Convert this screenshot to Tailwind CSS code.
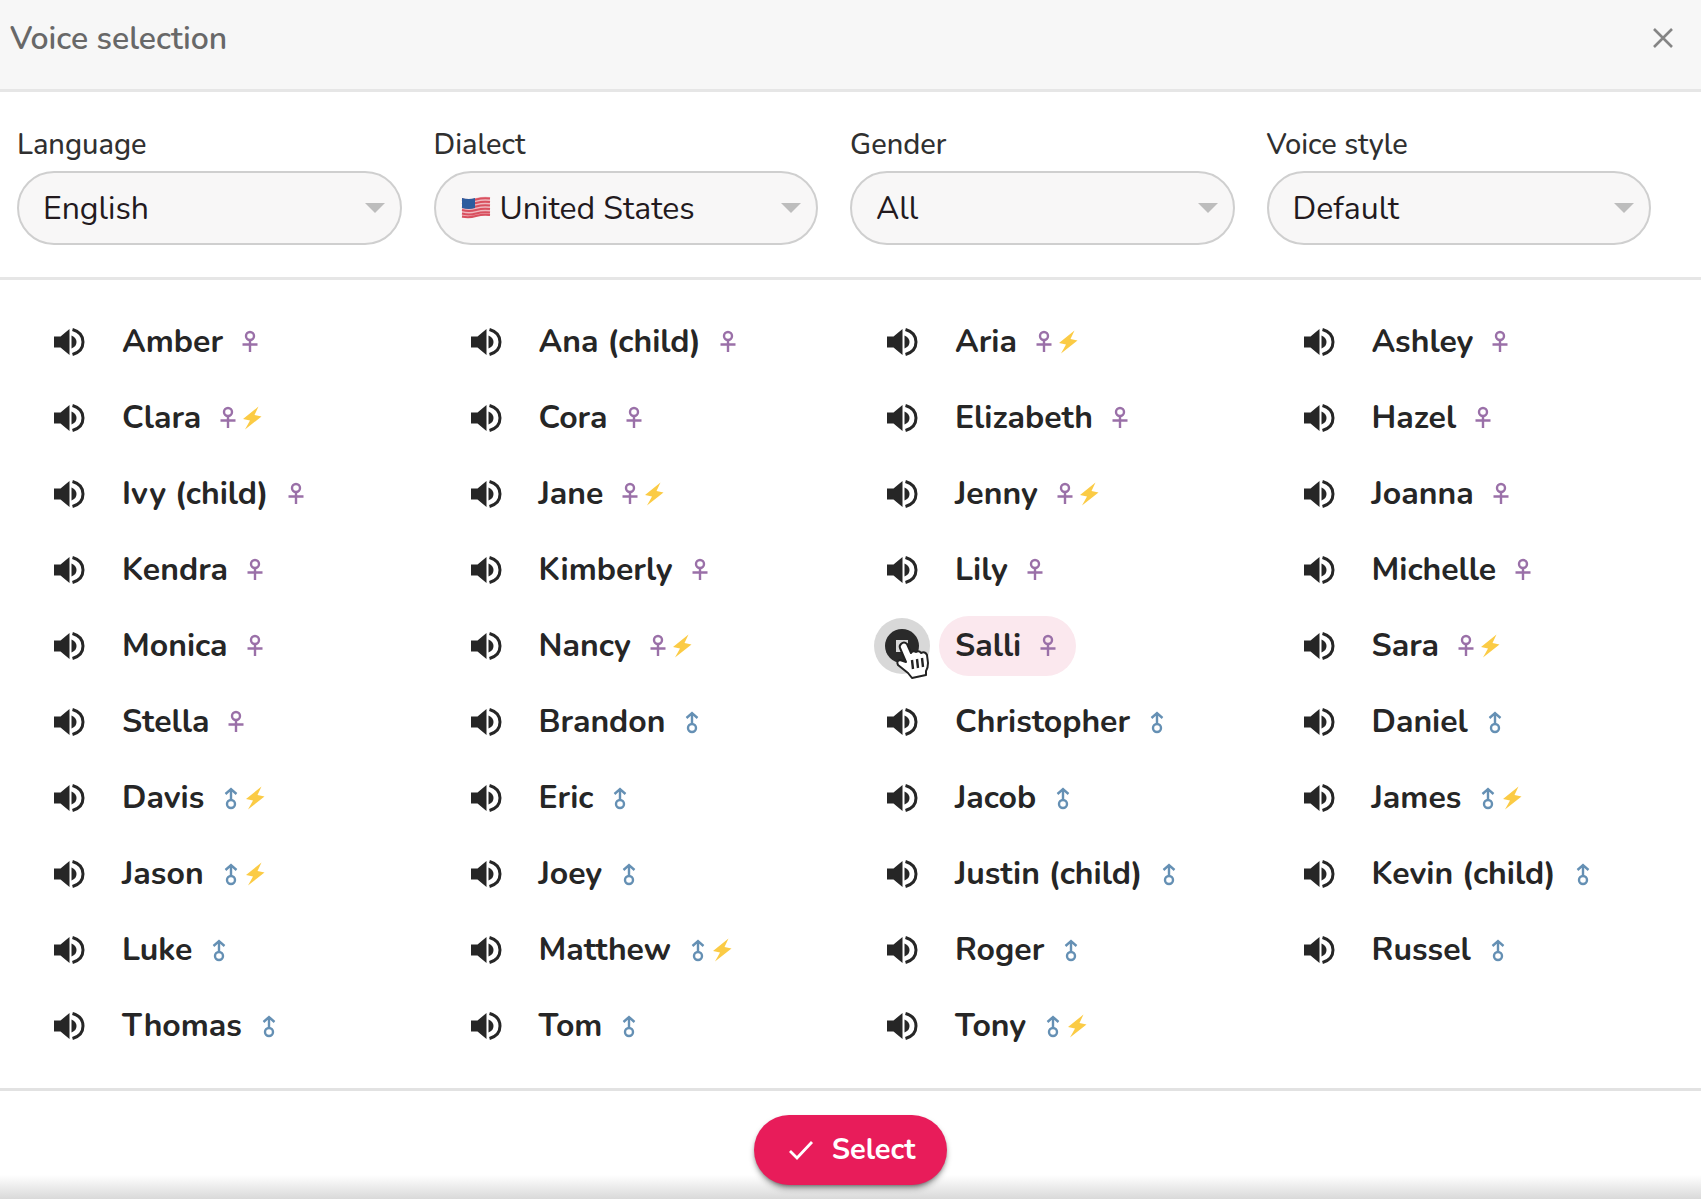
<!DOCTYPE html>
<html lang="en">
<head>
  <meta charset="UTF-8" />
  <meta name="viewport" content="width=device-width, initial-scale=1.0"/>
  <title>Voice selection</title>
  <script src="https://cdn.jsdelivr.net/npm/@tailwindcss/browser@4"></script>
</head>
<body class="min-h-screen flex flex-col bg-white text-[#262626] font-[Nunito,Lato,sans-serif]">
  <header class="flex items-start justify-between h-[92px] pt-4 pl-[10px] pr-5 bg-[#f7f7f7] border-b-3 border-[#e6e6e6]">
    <h1 class="text-[32px] leading-[46px] font-semibold text-[#686868]">Voice selection</h1>
    <button type="button" aria-label="Close" class="flex items-center justify-center size-[36px] mt-1 text-[#858585]">
      <svg class="size-5" viewBox="0 0 20 20" fill="none" stroke="currentColor" stroke-width="2.6"><path d="M1 1l18 18M19 1L1 19"/></svg>
    </button>
  </header>

  <!-- Filters -->
  <form class="grid grid-cols-4 gap-8 pl-[17px] pr-[50px] py-8 border-b-3 border-[#e6e6e6]">
    <div>
      <label for="language" class="block text-[29px] leading-[41px] font-medium mb-[6px] text-[#303030]">Language</label>
      <div class="relative">
        <select id="language" class="appearance-none w-full h-[74px] pl-6 pr-14 pt-[2px] rounded-full border-2 border-[#cfcfcf] bg-[#f8f7f7] text-[32px] text-[#231a1e]">
          <option>English</option>
        </select>
        <svg class="absolute right-[17px] top-8 w-5 h-[10px] text-[#bdbdbd] pointer-events-none" viewBox="0 0 20 10" fill="currentColor"><path d="M0 0h20L10 10z"/></svg>
      </div>
    </div>
    <div>
      <label for="dialect" class="block text-[29px] leading-[41px] font-medium mb-[6px] text-[#303030]">Dialect</label>
      <div class="relative">
        <select id="dialect" class="appearance-none w-full h-[74px] pl-16 pr-14 pt-[2px] rounded-full border-2 border-[#cfcfcf] bg-[#f8f7f7] text-[32px] text-[#231a1e]">
          <option>United States</option>
        </select>
        <svg class="absolute left-[27px] top-[25px] w-[30px] h-[23px] pointer-events-none" viewBox="0 0 30 23">
          <path d="M1 2Q8 4 15 2T29 1V20Q22 18 15 20T1 22z" fill="#efb9c0"/>
          <path d="M1 3.500Q8 5.500 15 3.500T29 2.500M1 7Q8 9 15 7T29 6M1 10.500Q8 12.500 15 10.500T29 9.500M1 14Q8 16 15 14T29 13M1 17.500Q8 19.500 15 17.500T29 16.500M1 20.500Q8 22 15 20T29 19" fill="none" stroke="#d9505f" stroke-width="2"/>
          <path d="M1 2Q8 4 14 2V12Q8 14 1 12z" fill="#2d5c9e"/>
        </svg>
        <svg class="absolute right-[17px] top-8 w-5 h-[10px] text-[#bdbdbd] pointer-events-none" viewBox="0 0 20 10" fill="currentColor"><path d="M0 0h20L10 10z"/></svg>
      </div>
    </div>
    <div>
      <label for="gender" class="block text-[29px] leading-[41px] font-medium mb-[6px] text-[#303030]">Gender</label>
      <div class="relative">
        <select id="gender" class="appearance-none w-full h-[74px] pl-6 pr-14 pt-[2px] rounded-full border-2 border-[#cfcfcf] bg-[#f8f7f7] text-[32px] text-[#231a1e]">
          <option>All</option>
        </select>
        <svg class="absolute right-[17px] top-8 w-5 h-[10px] text-[#bdbdbd] pointer-events-none" viewBox="0 0 20 10" fill="currentColor"><path d="M0 0h20L10 10z"/></svg>
      </div>
    </div>
    <div>
      <label for="voiceStyle" class="block text-[29px] leading-[41px] font-medium mb-[6px] text-[#303030]">Voice style</label>
      <div class="relative">
        <select id="voiceStyle" class="appearance-none w-full h-[74px] pl-6 pr-14 pt-[2px] rounded-full border-2 border-[#cfcfcf] bg-[#f8f7f7] text-[32px] text-[#231a1e]">
          <option>Default</option>
        </select>
        <svg class="absolute right-[17px] top-8 w-5 h-[10px] text-[#bdbdbd] pointer-events-none" viewBox="0 0 20 10" fill="currentColor"><path d="M0 0h20L10 10z"/></svg>
      </div>
    </div>
  </form>

  <ul id="voiceList" class="grid grid-cols-4 gap-x-8 pl-[17px] pr-[50px] py-6 border-b-3 border-[#e2e2e2]">
    <!-- Voices will be injected here -->
  </ul>

  <footer class="grow flex justify-center items-start pt-6 pb-4 bg-linear-to-t from-[#d6d6d6] to-white to-[26px]">
    <button type="button" class="flex items-center gap-[18px] h-[70px] px-8 rounded-full bg-[#e81c5a] text-white text-[29px] font-bold shadow-md shadow-black/40">
      <svg class="w-7 h-6" viewBox="0 0 28 24" fill="none" stroke="currentColor" stroke-width="2.8"><path d="M4 13l7 7L26 4"/></svg>
      Select
    </button>
  </footer>

  <script>
    // name, gender, supports styles (bolt)
    const voices = [
      ["Amber", "f"], ["Ana (child)", "f"], ["Aria", "f", true], ["Ashley", "f"],
      ["Clara", "f", true], ["Cora", "f"], ["Elizabeth", "f"], ["Hazel", "f"],
      ["Ivy (child)", "f"], ["Jane", "f", true], ["Jenny", "f", true], ["Joanna", "f"],
      ["Kendra", "f"], ["Kimberly", "f"], ["Lily", "f"], ["Michelle", "f"],
      ["Monica", "f"], ["Nancy", "f", true], ["Salli", "f"], ["Sara", "f", true],
      ["Stella", "f"], ["Brandon", "m"], ["Christopher", "m"], ["Daniel", "m"],
      ["Davis", "m", true], ["Eric", "m"], ["Jacob", "m"], ["James", "m", true],
      ["Jason", "m", true], ["Joey", "m"], ["Justin (child)", "m"], ["Kevin (child)", "m"],
      ["Luke", "m"], ["Matthew", "m", true], ["Roger", "m"], ["Russel", "m"],
      ["Thomas", "m"], ["Tom", "m"], ["Tony", "m", true],
    ];
    const playing = "Salli";

    const speaker = `<svg class="w-8 h-[30px]" viewBox="0 0 32 30"><path d="M1 9.500h6.500L16.500 2v26l-9-7.500H1z" fill="#262626"/><path d="M18.500 8.500q5 2 5 6.500t-5 6.500z" fill="#262626"/><path d="M19.500 2.500q10.500 3 10.500 12.500t-10.500 12.500" fill="none" stroke="#262626" stroke-width="3"/></svg>`;
    const stop = `<svg class="size-[34px]" viewBox="0 0 34 34"><circle cx="17" cy="17" r="17" fill="#2a2a2a"/><path d="M11 11h12v12H11z" fill="#d9d9d9"/></svg>`;
    const cursor = `<svg class="absolute left-[21px] top-[22px] w-[36px] h-[40px] pointer-events-none" viewBox="0 0 36 40"><path d="M6 4q3-3 6 0l4 9q2-3 5-1 3-2 5 1 4-2 6 2l1 8q0 5-2 8v4l-14 3-4-5-10-8q-2-4 2-5l6 2L5 8q-1-2 1-4z" fill="#fff" stroke="#222" stroke-width="2" stroke-linejoin="round"/><path d="M17 20l1 9M22 19l1 9M27 18l1 9" stroke="#222" stroke-width="2.4"/></svg>`;
    const female = `<svg class="size-6" viewBox="0 0 24 24" fill="none" stroke="#9a70a8" stroke-width="2.4"><circle cx="12" cy="6" r="4"/><path d="M12 10v12M4.500 14.500h15"/></svg>`;
    const male = `<svg class="size-6" viewBox="0 0 24 24" fill="none" stroke="#6590b4" stroke-width="2.4"><circle cx="12" cy="18" r="4"/><path d="M12 14V3M6.500 8L12 3l5.500 5"/></svg>`;
    const bolt = `<svg class="size-6" viewBox="0 0 24 24"><path d="M18.500 0.500L3 13l7 1.500L5 23.500 21.500 10.500l-7-1.500z" fill="#fbcb45"/></svg>`;

    document.getElementById("voiceList").innerHTML = voices.map(([name, gender, styled]) => {
      const active = name === playing;
      return `<li class="flex items-center gap-[9px] h-[76px] pl-6">
        <button type="button" aria-label="${active ? "Stop" : "Play"} ${name}" class="relative flex items-center justify-center size-14 shrink-0 rounded-full ${active ? "bg-[#d8d8d8]" : ""}">${active ? stop + cursor : speaker}</button>
        <button type="button" class="flex items-center h-[60px] px-4 rounded-full text-[32px] font-bold whitespace-nowrap ${active ? "bg-[#fbe8ee]" : ""}"><span class="mr-[15px]">${name}</span>${gender === "f" ? female : male}${styled ? bolt : ""}</button>
      </li>`;
    }).join("");
  </script>
</body>
</html>
